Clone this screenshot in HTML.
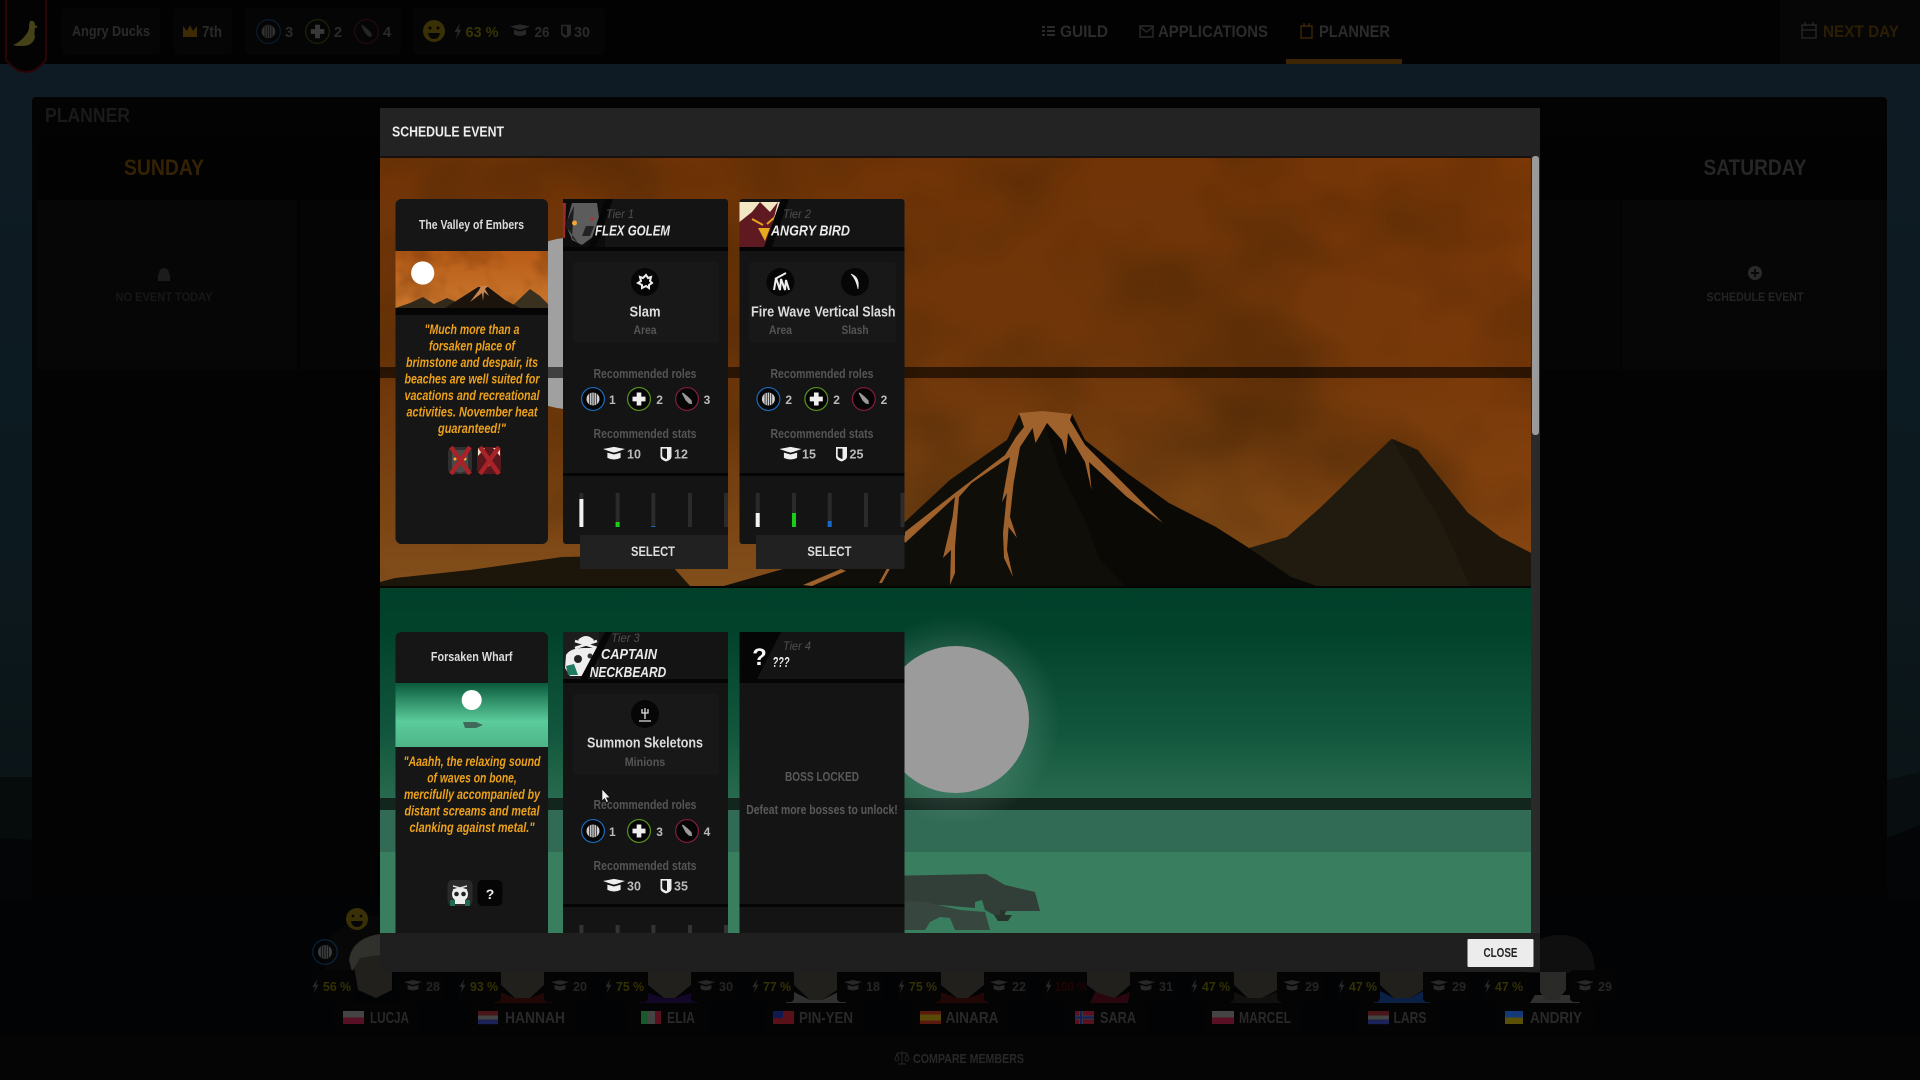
<!DOCTYPE html>
<html lang="en"><head><meta charset="utf-8"><title>Schedule Event</title>
<style>
html,body{margin:0;padding:0;width:1920px;height:1080px;overflow:hidden;background:#000}
svg{display:block}
text{font-family:"Liberation Sans",sans-serif;font-weight:700}
</style></head><body>
<svg xmlns="http://www.w3.org/2000/svg" width="1920" height="1080" viewBox="0 0 1920 1080">
<defs>
<linearGradient id="bgb" x1="0" y1="0" x2="0" y2="1"><stop offset="0" stop-color="#0e1b24"/><stop offset=".6" stop-color="#0c1a20"/><stop offset="1" stop-color="#0b1417"/></linearGradient>
<linearGradient id="org" x1="0" y1="0" x2="0" y2="1"><stop offset="0" stop-color="#703407"/><stop offset=".5" stop-color="#70370a"/><stop offset=".85" stop-color="#7c4614"/><stop offset="1" stop-color="#824f1b"/></linearGradient>
<linearGradient id="orgr" x1="0" y1="0" x2="1" y2="0"><stop offset=".72" stop-color="#8a3d08" stop-opacity="0"/><stop offset="1" stop-color="#8a3d08" stop-opacity=".45"/></linearGradient>
<linearGradient id="grn" x1="0" y1="0" x2="0" y2="1"><stop offset="0" stop-color="#013f29"/><stop offset=".2" stop-color="#02422b"/><stop offset=".7" stop-color="#12573d"/><stop offset="1" stop-color="#286a50"/></linearGradient>
<linearGradient id="thg" x1="0" y1="0" x2="0" y2="1"><stop offset="0" stop-color="#0a5a3c"/><stop offset=".6" stop-color="#5ccc9c"/><stop offset="1" stop-color="#4db487"/></linearGradient>
<linearGradient id="tho" x1="0" y1="0" x2="0" y2="1"><stop offset="0" stop-color="#b85c18"/><stop offset="1" stop-color="#cc7a30"/></linearGradient>
<radialGradient id="glow"><stop offset=".6" stop-color="#fff" stop-opacity=".13"/><stop offset="1" stop-color="#fff" stop-opacity="0"/></radialGradient>
<filter id="blot" x="0" y="0" width="100%" height="100%" color-interpolation-filters="sRGB"><feTurbulence type="fractalNoise" baseFrequency=".006 .008" numOctaves="3" seed="7"/><feColorMatrix values="0 0 0 0 .2  0 0 0 0 .11  0 0 0 0 .01  2.4 0 0 0 -1"/></filter>
<filter id="blot2" x="0" y="0" width="100%" height="100%" color-interpolation-filters="sRGB"><feTurbulence type="fractalNoise" baseFrequency=".03" numOctaves="3" seed="3"/><feColorMatrix values="0 0 0 0 .35  0 0 0 0 .15  0 0 0 0 0  2 0 0 0 -.85"/></filter>
<clipPath id="sc"><rect x="380" y="158" width="1151" height="775"/></clipPath>
<clipPath id="c1"><rect x="563" y="199" width="165" height="345"/></clipPath>
<clipPath id="c2"><rect x="739.5" y="199" width="165" height="345"/></clipPath>
<clipPath id="th"><rect x="395.5" y="251" width="152.5" height="64"/></clipPath>

<symbol id="cap" viewBox="-10 -10 20 20" overflow="visible"><path fill="currentColor" d="M-10,-4.500 L0,-6.500 L10,-4.500 L3,-2 L0,-1.200 L-3,-2 Z M-6,-1.300 L0,.5 L6,-1.300 V3.500 Q0,6.500 -6,3.500Z"/></symbol>
<symbol id="shd" viewBox="-10 -10 20 20" overflow="visible"><path fill="currentColor" d="M-5.500,-7H5.500V3Q5,6 0,7.500Q-5,6 -5.500,3Z"/><path fill="#141414" d="M-3.800,-5.400H1V5Q-3,4 -3.800,2Z"/></symbol>
<symbol id="shdd" viewBox="-10 -10 20 20" overflow="visible"><path fill="currentColor" d="M-5.500,-7H5.500V3Q5,6 0,7.500Q-5,6 -5.500,3Z"/><path fill="#060606" d="M-3.800,-5.400H1V5Q-3,4 -3.800,2Z"/></symbol>
<symbol id="tank" viewBox="-14 -14 28 28" overflow="visible"><circle r="12.300" fill="#050505" stroke="#1a6bbd" stroke-width="1.300"/><circle r="7" fill="#cfcfcf"/><path d="M-3.600,-6V6M-1.200,-7V7M1.200,-7V7M3.600,-6V6" stroke="#222" stroke-width=".9"/></symbol>
<symbol id="heal" viewBox="-14 -14 28 28" overflow="visible"><circle r="12.300" fill="#050505" stroke="#5a951f" stroke-width="1.300"/><path fill="#eee" d="M-2.500,-7H2.500V-2.500H7V2.500H2.500V7H-2.500V2.500H-7V-2.500H-2.500Z"/></symbol>
<symbol id="dps" viewBox="-14 -14 28 28" overflow="visible"><circle r="12.300" fill="#050505" stroke="#861c40" stroke-width="1.300"/><path fill="#9a9a9a" d="M-5.500,-6 L-4.500,-7 L1,-2.500 L5,1.500 L5.500,5.500 L2,5 L-1.500,1.500Z"/></symbol>
<symbol id="bolt" viewBox="-6 -9 12 18" overflow="visible"><path fill="currentColor" d="M2,-8 L-3.400,1 H-.4 L-2,8 L3.400,-1.400 H.4Z"/></symbol>
</defs>

<!-- page -->
<rect width="1920" height="1080" fill="#020304"/>
<rect y="64" width="1920" height="720" fill="url(#bgb)"/>
<path d="M0,777 L32,777 V840 L0,838Z" fill="#060b0c"/>
<path d="M0,838 L32,840 V900 L0,900Z M1887,838 Q1905,830 1920,820 V900 H1887Z" fill="#030506"/>
<path d="M1887,780 L1920,772 V825 L1887,838Z" fill="#080e10"/>
<rect y="1035" width="1920" height="45" fill="#050505"/>
<rect width="1920" height="64" fill="#020202"/>
<rect x="1780" width="140" height="64" fill="#060606"/>

<!-- top bar -->
<path d="M6,-2V60Q26,84 46,60V-2Z" fill="#030303" stroke="#2c0406" stroke-width="2"/>
<path d="M30,21 Q35,20 35,25 L38,27 L35,28 Q34,33 35,37 Q33,46 22,46 Q15,46 13,45 Q20,42 25,36 Q30,30 29,25Z" fill="#454219"/>
<g fill="#050505"><rect x="62" y="8" width="98" height="47" rx="4"/><rect x="174" y="8" width="58" height="47" rx="4"/><rect x="245" y="8" width="156" height="47" rx="4"/><rect x="413" y="8" width="192" height="47" rx="4"/></g>
<text x="111" y="36" font-size="15" fill="#2a2a2a" text-anchor="middle" textLength="78" lengthAdjust="spacingAndGlyphs">Angry Ducks</text>
<path d="M183,37 V26 L187,31 L190,25 L193,31 L197,26 V37Z" fill="#3d2b05"/>
<text x="212" y="37" font-size="16" fill="#2a2a2a" text-anchor="middle" textLength="20" lengthAdjust="spacingAndGlyphs">7th</text>
<g opacity=".22"><use href="#tank" x="255" y="18" width="27" height="27"/><use href="#heal" x="304" y="18" width="27" height="27"/><use href="#dps" x="353" y="18" width="27" height="27"/></g>
<g font-size="15" fill="#2a2a2a" text-anchor="middle"><text x="289" y="37">3</text><text x="338" y="37">2</text><text x="387" y="37">4</text></g>
<circle cx="434" cy="31" r="11" fill="#3a3005"/><path d="M428,33 H440 Q439,39 434,39 Q429,39 428,33Z" fill="#050505"/><circle cx="430" cy="28" r="1.500" fill="#050505"/><circle cx="438" cy="28" r="1.500" fill="#050505"/>
<use href="#bolt" x="452" y="22" width="12" height="18" color="#282828"/>
<text x="482" y="37" font-size="15" fill="#373405" text-anchor="middle" textLength="33" lengthAdjust="spacingAndGlyphs">63 %</text>
<use href="#cap" x="510" y="21" width="20" height="20" color="#282828"/>
<text x="542" y="37" font-size="15" fill="#2a2a2a" text-anchor="middle" textLength="15" lengthAdjust="spacingAndGlyphs">26</text>
<use href="#shdd" x="557" y="22" width="18" height="18" color="#282828"/>
<text x="582" y="37" font-size="15" fill="#2a2a2a" text-anchor="middle" textLength="16" lengthAdjust="spacingAndGlyphs">30</text>
<!-- nav -->
<path d="M1042,26h3v2h-3zM1047,26h8v2h-8zM1042,30h3v2h-3zM1047,30h8v2h-8zM1042,34h3v2h-3zM1047,34h8v2h-8z" fill="#2a2a2a"/>
<text x="1084" y="37" font-size="17" fill="#2b2b2b" text-anchor="middle" textLength="48" lengthAdjust="spacingAndGlyphs">GUILD</text>
<path d="M1140,26h13v11h-13zM1140,27l6.500,5l6.500,-5" fill="none" stroke="#2a2a2a" stroke-width="1.400"/>
<text x="1213" y="37" font-size="17" fill="#2b2b2b" text-anchor="middle" textLength="110" lengthAdjust="spacingAndGlyphs">APPLICATIONS</text>
<path d="M1301,26h11v12h-11zM1304,23v4M1309,23v4" fill="none" stroke="#3a2505" stroke-width="1.400"/>
<text x="1354.500" y="37" font-size="17" fill="#2b2b2b" text-anchor="middle" textLength="71" lengthAdjust="spacingAndGlyphs">PLANNER</text>
<rect x="1286" y="59" width="116" height="5" fill="#3c2405"/>
<path d="M1802,25h14v13h-14zM1802,30h14M1805,22v4M1813,22v4" fill="none" stroke="#2a2a2a" stroke-width="1.300"/>
<text x="1861" y="37" font-size="17" fill="#2c1e05" text-anchor="middle" textLength="76" lengthAdjust="spacingAndGlyphs">NEXT DAY</text>

<!-- planner panel -->
<rect x="32" y="97" width="1855" height="801" rx="4" fill="#030303"/>
<rect x="38" y="137" width="1849" height="63" fill="#020202"/>
<rect x="38" y="200" width="259" height="170" fill="#060606"/>
<rect x="300" y="200" width="80" height="170" fill="#050505"/>
<rect x="1540" y="200" width="80" height="170" fill="#050505"/>
<rect x="1622" y="200" width="265" height="170" fill="#060606"/>
<text x="87.500" y="122" font-size="20" fill="#1a1a1a" text-anchor="middle" textLength="85" lengthAdjust="spacingAndGlyphs">PLANNER</text>
<text x="164" y="175" font-size="22" fill="#352205" text-anchor="middle" textLength="80" lengthAdjust="spacingAndGlyphs">SUNDAY</text>
<text x="1755" y="175" font-size="22" fill="#262626" text-anchor="middle" textLength="103" lengthAdjust="spacingAndGlyphs">SATURDAY</text>
<path d="M159,273a5,5 0 0 1 10,0v1h1v7h-12v-7h1z" fill="#1c1c1c"/>
<text x="164" y="301" font-size="12" fill="#171717" text-anchor="middle" textLength="97" lengthAdjust="spacingAndGlyphs">NO EVENT TODAY</text>
<circle cx="1755" cy="273" r="7" fill="#2a2a2a"/><path d="M1755,269v8M1751,273h8" stroke="#080808" stroke-width="2"/>
<text x="1755" y="301" font-size="12" fill="#242424" text-anchor="middle" textLength="97" lengthAdjust="spacingAndGlyphs">SCHEDULE EVENT</text>

<!-- members -->
<g>
<path d="M325,972 V945 Q340,920 375,915 L395,915 V972Z" fill="#070707"/>
<circle cx="357" cy="919" r="11" fill="#3a3005"/><path d="M351,921H363Q362,927 357,927Q352,927 351,921Z" fill="#060606"/><circle cx="353" cy="916" r="1.400" fill="#060606"/><circle cx="361" cy="916" r="1.400" fill="#060606"/>
<use href="#tank" x="311" y="938" width="28" height="28" opacity=".28"/>
</g>
<g fill="#22201c">
<path d="M352,955H392V990L376,998L358,990Z"/>
<path d="M501,972H544V985L530,998H515L501,985Z"/><path d="M648,972H691V985L675,998H664L648,985Z"/>
<path d="M794,972H837V990L822,1000H810L794,985Z"/><path d="M941,972H984V985L968,998H957L941,985Z"/>
<path d="M1087,972H1130V985L1115,998H1104L1087,985Z"/><path d="M1234,972H1277V990L1262,998H1248L1234,985Z"/>
<path d="M1380,972H1423V990L1410,998H1394L1380,985Z"/>
</g>
<path d="M349,960 Q352,938 380,934 V955 L360,958 L352,972Z" fill="#30302c"/>
<g>
<path d="M500,992L515,998H530L546,992L552,1003H494Z" fill="#220707"/>
<path d="M645,992L664,998H675L694,992L698,1003H640Z" fill="#120726"/>
<path d="M790,990L810,1000H822L842,990L846,1003H786Z" fill="#30302e"/>
<path d="M940,992L957,998H968L985,992L990,1003H935Z" fill="#220707"/>
<path d="M1095,992L1115,998L1130,992L1128,1003H1090Z" fill="#2a060e"/>
<path d="M1234,992L1248,998H1262L1277,992L1282,1003H1230Z" fill="#12100e"/>
<path d="M1378,990L1394,998H1410L1425,990L1430,1003H1374Z" fill="#0a2044"/>
<path d="M1535,995H1575L1580,1003H1530Z" fill="#30302e"/>
<path d="M1525,973 Q1525,935 1560,935 Q1595,935 1595,973 V1000 H1578 V973H1540Z" fill="#0f0f0f"/>
<path d="M1540,972H1566V990L1558,1000H1546L1540,992Z" fill="#2a2a28"/>
</g>
<!-- stat chips + plates -->
<g fill="#040404">
<rect x="312" y="970" width="43" height="32" rx="4"/><rect x="398" y="970" width="46" height="32" rx="4"/>
<rect x="458" y="970" width="43" height="32" rx="4"/><rect x="544" y="970" width="46" height="32" rx="4"/>
<rect x="605" y="970" width="43" height="32" rx="4"/><rect x="691" y="970" width="46" height="32" rx="4"/>
<rect x="751" y="970" width="43" height="32" rx="4"/><rect x="837" y="970" width="46" height="32" rx="4"/>
<rect x="898" y="970" width="43" height="32" rx="4"/><rect x="984" y="970" width="46" height="32" rx="4"/>
<rect x="1044" y="970" width="43" height="32" rx="4"/><rect x="1130" y="970" width="46" height="32" rx="4"/>
<rect x="1191" y="970" width="43" height="32" rx="4"/><rect x="1277" y="970" width="46" height="32" rx="4"/>
<rect x="1337" y="970" width="43" height="32" rx="4"/><rect x="1423" y="970" width="46" height="32" rx="4"/>
<rect x="1484" y="970" width="43" height="32" rx="4"/><rect x="1570" y="970" width="46" height="32" rx="4"/>
<rect x="334" y="1003" width="85" height="31" rx="3"/><rect x="470" y="1003" width="105" height="31" rx="3"/>
<rect x="626" y="1003" width="84" height="31" rx="3"/><rect x="764" y="1003" width="99" height="31" rx="3"/>
<rect x="912" y="1003" width="97" height="31" rx="3"/><rect x="1064" y="1003" width="83" height="31" rx="3"/>
<rect x="1204" y="1003" width="98" height="31" rx="3"/><rect x="1357" y="1003" width="84" height="31" rx="3"/>
<rect x="1496" y="1003" width="98" height="31" rx="3"/>
</g>
<g font-size="13" text-anchor="middle">
<g fill="#343105">
<text x="337" y="991" textLength="28" lengthAdjust="spacingAndGlyphs">56 %</text>
<text x="484" y="991" textLength="28" lengthAdjust="spacingAndGlyphs">93 %</text>
<text x="630" y="991" textLength="28" lengthAdjust="spacingAndGlyphs">75 %</text>
<text x="777" y="991" textLength="28" lengthAdjust="spacingAndGlyphs">77 %</text>
<text x="923" y="991" textLength="28" lengthAdjust="spacingAndGlyphs">75 %</text>
<text x="1216" y="991" textLength="28" lengthAdjust="spacingAndGlyphs">47 %</text>
<text x="1363" y="991" textLength="28" lengthAdjust="spacingAndGlyphs">47 %</text>
<text x="1509" y="991" textLength="28" lengthAdjust="spacingAndGlyphs">47 %</text>
</g>
<text x="1071" y="991" fill="#200405" textLength="32" lengthAdjust="spacingAndGlyphs">100 %</text>
<g fill="#252525">
<text x="433" y="991" textLength="14" lengthAdjust="spacingAndGlyphs">28</text><text x="580" y="991" textLength="14" lengthAdjust="spacingAndGlyphs">20</text><text x="726" y="991" textLength="14" lengthAdjust="spacingAndGlyphs">30</text><text x="873" y="991" textLength="14" lengthAdjust="spacingAndGlyphs">18</text><text x="1019" y="991" textLength="14" lengthAdjust="spacingAndGlyphs">22</text><text x="1166" y="991" textLength="14" lengthAdjust="spacingAndGlyphs">31</text><text x="1312" y="991" textLength="14" lengthAdjust="spacingAndGlyphs">29</text><text x="1459" y="991" textLength="14" lengthAdjust="spacingAndGlyphs">29</text><text x="1605" y="991" textLength="14" lengthAdjust="spacingAndGlyphs">29</text>
</g>
</g>
<g color="#282828">
<use href="#bolt" x="310" y="978" width="11" height="16"/><use href="#bolt" x="457" y="978" width="11" height="16"/><use href="#bolt" x="603" y="978" width="11" height="16"/><use href="#bolt" x="750" y="978" width="11" height="16"/><use href="#bolt" x="896" y="978" width="11" height="16"/><use href="#bolt" x="1043" y="978" width="11" height="16"/><use href="#bolt" x="1189" y="978" width="11" height="16"/><use href="#bolt" x="1336" y="978" width="11" height="16"/><use href="#bolt" x="1482" y="978" width="11" height="16"/>
<use href="#cap" x="404" y="977" width="18" height="18"/><use href="#cap" x="551" y="977" width="18" height="18"/><use href="#cap" x="697" y="977" width="18" height="18"/><use href="#cap" x="844" y="977" width="18" height="18"/><use href="#cap" x="990" y="977" width="18" height="18"/><use href="#cap" x="1137" y="977" width="18" height="18"/><use href="#cap" x="1283" y="977" width="18" height="18"/><use href="#cap" x="1430" y="977" width="18" height="18"/><use href="#cap" x="1576" y="977" width="18" height="18"/>
</g>
<g font-size="16" fill="#292929" text-anchor="middle">
<text x="389.500" y="1023" textLength="39" lengthAdjust="spacingAndGlyphs">LUCJA</text>
<text x="535" y="1023" textLength="60" lengthAdjust="spacingAndGlyphs">HANNAH</text>
<text x="681" y="1023" textLength="28" lengthAdjust="spacingAndGlyphs">ELIA</text>
<text x="826" y="1023" textLength="54" lengthAdjust="spacingAndGlyphs">PIN-YEN</text>
<text x="972" y="1023" textLength="53" lengthAdjust="spacingAndGlyphs">AINARA</text>
<text x="1118" y="1023" textLength="36" lengthAdjust="spacingAndGlyphs">SARA</text>
<text x="1265" y="1023" textLength="52" lengthAdjust="spacingAndGlyphs">MARCEL</text>
<text x="1410" y="1023" textLength="33" lengthAdjust="spacingAndGlyphs">LARS</text>
<text x="1556" y="1023" textLength="52" lengthAdjust="spacingAndGlyphs">ANDRIY</text>
</g>
<!-- flags -->
<rect x="343" y="1011" width="21" height="6.500" fill="#444"/><rect x="343" y="1017.500" width="21" height="6.500" fill="#5a1024"/>
<rect x="478" y="1011" width="20" height="4.400" fill="#4a1518"/><rect x="478" y="1015.400" width="20" height="4.400" fill="#444"/><rect x="478" y="1019.800" width="20" height="4.400" fill="#1a2258"/>
<rect x="641" y="1011" width="7" height="13" fill="#1a5a2a"/><rect x="648" y="1011" width="7" height="13" fill="#444"/><rect x="655" y="1011" width="6" height="13" fill="#5a1020"/>
<rect x="773" y="1011" width="21" height="13" fill="#5a1018"/><rect x="773" y="1011" width="10" height="7" fill="#101a50"/>
<rect x="920" y="1011" width="21" height="13" fill="#5a1a10"/><rect x="920" y="1014.500" width="21" height="6" fill="#5a4a08"/>
<rect x="1075" y="1011" width="19" height="13" fill="#5a1020"/><rect x="1079" y="1011" width="4" height="13" fill="#3a3a3a"/><rect x="1075" y="1015.500" width="19" height="4" fill="#3a3a3a"/><rect x="1080" y="1011" width="2" height="13" fill="#12205a"/><rect x="1075" y="1016.500" width="19" height="2" fill="#12205a"/>
<rect x="1212" y="1011" width="22" height="6.500" fill="#444"/><rect x="1212" y="1017.500" width="22" height="6.500" fill="#5a1024"/>
<rect x="1368" y="1011" width="21" height="4.400" fill="#4a1518"/><rect x="1368" y="1015.400" width="21" height="4.400" fill="#444"/><rect x="1368" y="1019.800" width="21" height="4.400" fill="#1a2258"/>
<rect x="1505" y="1011" width="18" height="6.500" fill="#123a78"/><rect x="1505" y="1017.500" width="18" height="6.500" fill="#5a5008"/>
<!-- compare -->
<path d="M897,1053h10M902,1051v13M898,1064h8M895,1059l2,-5l2,5a2,2 0 0 1-4,0M905,1059l2,-5l2,5a2,2 0 0 1-4,0" fill="none" stroke="#262626" stroke-width="1"/>
<text x="968.500" y="1063" font-size="13" fill="#282828" text-anchor="middle" textLength="111" lengthAdjust="spacingAndGlyphs">COMPARE MEMBERS</text>

<!-- modal -->
<rect x="380" y="108" width="1160" height="48" fill="#232323"/>
<rect x="380" y="156" width="1160" height="2" fill="#161010"/>
<text x="448" y="136.500" font-size="14.500" fill="#ededed" text-anchor="middle" textLength="112" lengthAdjust="spacingAndGlyphs">SCHEDULE EVENT</text>
<rect x="380" y="933" width="1160" height="39" fill="#1f1f1f"/>
<rect x="1531" y="156" width="9" height="777" fill="#2a2a2a"/>
<rect x="1532" y="156" width="7" height="279" rx="3" fill="#9a9a9a"/>
<rect x="1467.500" y="939" width="66" height="28" rx="1" fill="#ececec"/>
<text x="1500.500" y="957" font-size="13" fill="#222" text-anchor="middle" textLength="34" lengthAdjust="spacingAndGlyphs">CLOSE</text>

<g clip-path="url(#sc)">
<!-- ROW 1 -->
<rect x="380" y="158" width="1151" height="430" fill="url(#org)"/>
<rect x="380" y="158" width="1151" height="428" fill="url(#orgr)"/>
<rect x="380" y="158" width="1151" height="428" filter="url(#blot)" opacity=".4"/>
<circle cx="573" cy="323.500" r="86" fill="#a0a0a0"/>
<rect x="380" y="367" width="1151" height="11" fill="#000" opacity=".6"/>
<!-- mountains -->
<path d="M1249,548 L1287,537 L1321,507 L1359,470 L1391.600,438.700 L1417.700,450 L1468,513 L1500,537 L1531,553 V586 H1249Z" fill="#211a0e"/>
<path d="M1391.600,438.700 L1417.700,450 L1468,513 L1500,537 L1531,553 V586 H1470 L1440,520Z" fill="#1b150c"/>
<path d="M1019,415 L1043,411 L1072,414 L1085,440 L1127,473 L1169,503 L1216,527 L1249,548 L1291,577 L1317,586 H724 L780,570 L840,552 L905,522 L950,480 L1007,440Z" fill="#0b0905"/>
<path d="M1019,415 L1043,420 L1060,470 L1085,520 L1100,560 L1125,586 H724 L780,570 L840,552 L905,522 L950,480 L1007,440Z" fill="#100e09"/>
<path d="M1019,413 L1043,411 L1072,414 L1070,420 L1085,445 L1163,523 L1127,497 L1089,462 L1091.500,490 L1085,462 L1068,433 L1066,455 L1062,440 L1047,423 L1035.500,443 L1032.600,428 L1020,447 L1013.600,483 L1010,517 L1017,538 L1008.600,527 L1007,550 L1013,577 L1004,558 L1003,533 L1007,493 L1002,502 L1010,457 L971.500,483 L959,497 L955,547 L955,573 L950,585 L951,550 L943,558 L952.600,517 L955,497 L905,543 L905,532 L955,493 L1005,455 L1016,437 L1024,427Z" fill="#a0622c"/>
<path d="M905,535 L920,525 L904,543 L882,583 L879,583 Z M803,585 L841,569 L846,571 L812,586Z" fill="#a0622c"/>
<!-- left ground -->
<path d="M380,586 V582 L395,578 L470,570 L562,557 L620,556 L673,567 L690,586Z" fill="#1c150a"/>
<rect x="380" y="586" width="1151" height="2" fill="#060504"/>

<!-- ROW 2 -->
<rect x="380" y="588" width="1151" height="210" fill="url(#grn)"/>
<rect x="380" y="798" width="1151" height="12" fill="#12261e"/>
<rect x="380" y="810" width="1151" height="42" fill="#316b55"/>
<rect x="380" y="852" width="1151" height="81" fill="#387e5f"/>
<circle cx="955.500" cy="719.500" r="105" fill="url(#glow)"/>
<circle cx="955.500" cy="719.500" r="73.500" fill="#9b9b9b"/>
<path d="M880,876 L986,874 L1005,885 L1035,892 L1040,911 L1007,911 L1000,918 L985,910 L982,900 L975,902 L975,908 L940,905 L905,905 L880,900Z" fill="#323f38"/>
<path d="M880,900 L925,902 L960,910 L985,912 L990,930 L955,930 L950,918 L940,917 L930,922 L925,930 L880,930Z" fill="#37463e"/>
<path d="M994,915 H1012 L1008,921 H998Z" fill="#27332d"/><rect x="1000" y="910" width="5" height="6" fill="#27332d"/>

<!-- CARD: VALLEY -->
<rect x="395.500" y="199" width="152.500" height="345" rx="6" fill="#161616"/>
<text x="471.500" y="229" font-size="13" fill="#dcdcdc" text-anchor="middle" textLength="105" lengthAdjust="spacingAndGlyphs">The Valley of Embers</text>
<g clip-path="url(#th)">
<rect x="395.500" y="251" width="152.500" height="64" fill="url(#tho)"/>
<rect x="395.500" y="251" width="152.500" height="57" filter="url(#blot2)" opacity=".45"/>
<circle cx="422.700" cy="273" r="11.600" fill="#fff"/>
<path d="M395.500,308 L410,303 L423,297 L434,304 L447,298 L458,303 L470,308Z" fill="#33291a"/>
<path d="M510,308 L530,289 L540,296 L548,304V308Z" fill="#3a3020"/>
<path d="M445,308 L478,287 L488,287 L505,300 L520,308Z" fill="#1a140d"/>
<path d="M481,286h7l-3,3l4,7l-5,-4l-1,9l-1,-8l-12,9l9,-12z" fill="#c98550"/>
<rect x="395.500" y="308" width="152.500" height="7" fill="#050505"/>
</g>
<g font-size="13.500" fill="#eca11b" text-anchor="middle" font-style="italic">
<text x="472" y="334" textLength="95" lengthAdjust="spacingAndGlyphs">"Much more than a</text>
<text x="472" y="350.500" textLength="86" lengthAdjust="spacingAndGlyphs">forsaken place of</text>
<text x="472" y="367" textLength="132" lengthAdjust="spacingAndGlyphs">brimstone and despair, its</text>
<text x="472" y="383.500" textLength="135" lengthAdjust="spacingAndGlyphs">beaches are well suited for</text>
<text x="472" y="400" textLength="135" lengthAdjust="spacingAndGlyphs">vacations and recreational</text>
<text x="472" y="416.500" textLength="131" lengthAdjust="spacingAndGlyphs">activities. November heat</text>
<text x="472" y="433" textLength="68" lengthAdjust="spacingAndGlyphs">guaranteed!"</text>
</g>
<rect x="448" y="447" width="24" height="27" rx="5" fill="#2f2f2f"/><rect x="477" y="447" width="24" height="27" rx="5" fill="#5a181c"/>
<path d="M452,450H468V470L460,473L452,470Z" fill="#4a4a4a"/>
<circle cx="455" cy="459" r="1.500" fill="#fa3"/><circle cx="465" cy="459" r="1.500" fill="#fa3"/>
<path d="M478,448h7l-7,8zM500,448h-7l7,8z" fill="#f0e4c4"/><path d="M487,460h4l-2,7z" fill="#e7a41f"/>
<path d="M451,447 L470,474 M470,447 L451,474 M480,447 L499,474 M499,447 L480,474" stroke="#a82228" stroke-width="4.500"/>

<!-- CARD: FLEX GOLEM -->
<g clip-path="url(#c1)">
<rect x="563" y="199" width="165" height="345" rx="3" fill="#141414"/>
<rect x="563" y="199" width="42" height="48" fill="#0c0c0c"/>
<path d="M563,203 L566,203 L565,238 L563,238Z" fill="#9c2a2a"/>
<path d="M572,203 H597 L599,217 L594,236 L582,245 L572,240 L566,225Z" fill="#5c5c5c"/>
<path d="M565,225 L574,206 L572,238 L578,243Z" fill="#1d1d1d"/>
<path d="M586,226 H594 L590,236 H582Z" fill="#222"/>
<circle cx="574.500" cy="223" r="2.500" fill="#f0a43a"/><circle cx="592" cy="219" r="1.800" fill="#a33"/>
<path d="M605,199 H613 L596,247 H589Z" fill="#060606"/>
<rect x="563" y="247" width="165" height="4" fill="#050505"/>
<text x="620" y="218" font-size="12" fill="#505050" text-anchor="middle" style="font-style:italic;font-weight:400" textLength="28" lengthAdjust="spacingAndGlyphs">Tier 1</text>
<text x="632.500" y="235.500" font-size="15" fill="#eaeaea" text-anchor="middle" font-style="italic" textLength="75" lengthAdjust="spacingAndGlyphs">FLEX GOLEM</text>
<rect x="573" y="262" width="146" height="81" rx="3" fill="#181818"/>
<circle cx="645" cy="282" r="14" fill="#060606"/>
<path d="M640,277 L643,278 L646,275 L648,278 L651,277 L650,281 L652,283 L649,285 L649,288 L646,286 L642,288 L642,285 L638,283 L641,281Z" fill="none" stroke="#eee" stroke-width="2"/>
<text x="645" y="316.500" font-size="15" fill="#dcdcdc" text-anchor="middle" textLength="31" lengthAdjust="spacingAndGlyphs">Slam</text>
<text x="645" y="334" font-size="12" fill="#555" text-anchor="middle" textLength="23" lengthAdjust="spacingAndGlyphs">Area</text>
<text x="645" y="378" font-size="12.500" fill="#555" text-anchor="middle" textLength="103" lengthAdjust="spacingAndGlyphs">Recommended roles</text>
<use href="#tank" x="580" y="386" width="26" height="26"/><use href="#heal" x="626" y="386" width="26" height="26"/><use href="#dps" x="674" y="386" width="26" height="26"/>
<g font-size="12" fill="#bbb" text-anchor="middle"><text x="612.400" y="404">1</text><text x="659.600" y="404">2</text><text x="707" y="404">3</text></g>
<text x="645" y="438" font-size="12.500" fill="#555" text-anchor="middle" textLength="103" lengthAdjust="spacingAndGlyphs">Recommended stats</text>
<use href="#cap" x="603" y="443" width="22" height="22" color="#eee"/><use href="#shd" x="656" y="444" width="20" height="20" color="#eee"/>
<g font-size="12.500" fill="#bbb" text-anchor="middle"><text x="634" y="458.500">10</text><text x="681" y="458.500">12</text></g>
<rect x="563" y="473" width="165" height="3" fill="#050505"/>
</g>
<rect x="579.400" y="493" width="4" height="34" fill="#2b2b2b"/><rect x="615.600" y="493" width="4" height="34" fill="#2b2b2b"/><rect x="651.400" y="493" width="4" height="34" fill="#2b2b2b"/><rect x="688" y="493" width="4" height="34" fill="#2b2b2b"/><rect x="724" y="493" width="4" height="34" fill="#2b2b2b"/>
<rect x="579.400" y="499" width="4" height="28" fill="#f2f2f2"/><rect x="615.600" y="522" width="4" height="5" fill="#17cf17"/><rect x="651.400" y="526" width="4" height="1" fill="#1766c9"/>
<rect x="580" y="535" width="148" height="34" fill="#212121"/>
<text x="653" y="556" font-size="13.500" fill="#dcdcdc" text-anchor="middle" textLength="44" lengthAdjust="spacingAndGlyphs">SELECT</text>

<!-- CARD: ANGRY BIRD -->
<g clip-path="url(#c2)">
<rect x="739.500" y="199" width="165" height="345" rx="3" fill="#141414"/>
<path d="M739.500,202 H782 L768,247 H739.500Z" fill="#f3e6c4"/>
<path d="M739.500,222 L752,212 L760,202 L770,212 L778,202 L770,233 L766,247 H739.500Z" fill="#5e1a20"/>
<path d="M752,219 L763,225 M775,217 L767,224" stroke="#e7a41f" stroke-width="2"/>
<path d="M758,228 H770 L765,241Z" fill="#e8a920"/>
<path d="M781,199 H789 L772,247 H764Z" fill="#060606"/>
<rect x="739.500" y="247" width="165" height="4" fill="#050505"/>
<text x="797" y="218" font-size="12" fill="#505050" text-anchor="middle" style="font-style:italic;font-weight:400" textLength="28" lengthAdjust="spacingAndGlyphs">Tier 2</text>
<text x="810.500" y="235.500" font-size="15" fill="#eaeaea" text-anchor="middle" font-style="italic" textLength="79" lengthAdjust="spacingAndGlyphs">ANGRY BIRD</text>
<rect x="749" y="262" width="147" height="81" rx="3" fill="#181818"/>
<circle cx="780.500" cy="282" r="14" fill="#060606"/><circle cx="855" cy="282" r="14" fill="#060606"/>
<path d="M775,279 L786,273 M774,290 L776,278 L780,290 L781,279 L785,290 L786,280 L789,290" fill="none" stroke="#eee" stroke-width="2"/>
<path d="M851,274 Q860,277 858,289 Q856,279 851,274Z" fill="#eee" stroke="#eee" stroke-width=".6"/>
<text x="780.700" y="316.500" font-size="15" fill="#dcdcdc" text-anchor="middle" textLength="59.500" lengthAdjust="spacingAndGlyphs">Fire Wave</text>
<text x="855" y="316.500" font-size="15" fill="#dcdcdc" text-anchor="middle" textLength="81" lengthAdjust="spacingAndGlyphs">Vertical Slash</text>
<text x="780.500" y="334" font-size="12" fill="#555" text-anchor="middle" textLength="23" lengthAdjust="spacingAndGlyphs">Area</text>
<text x="855" y="334" font-size="12" fill="#555" text-anchor="middle" textLength="27" lengthAdjust="spacingAndGlyphs">Slash</text>
<text x="822" y="378" font-size="12.500" fill="#555" text-anchor="middle" textLength="103" lengthAdjust="spacingAndGlyphs">Recommended roles</text>
<use href="#tank" x="755.400" y="386" width="26" height="26"/><use href="#heal" x="803.300" y="386" width="26" height="26"/><use href="#dps" x="850.800" y="386" width="26" height="26"/>
<g font-size="12" fill="#bbb" text-anchor="middle"><text x="788.700" y="404">2</text><text x="836.600" y="404">2</text><text x="884" y="404">2</text></g>
<text x="822" y="438" font-size="12.500" fill="#555" text-anchor="middle" textLength="103" lengthAdjust="spacingAndGlyphs">Recommended stats</text>
<use href="#cap" x="779.500" y="443" width="22" height="22" color="#eee"/><use href="#shd" x="831.500" y="444" width="20" height="20" color="#eee"/>
<g font-size="12.500" fill="#bbb" text-anchor="middle"><text x="809" y="458.500">15</text><text x="856.500" y="458.500">25</text></g>
<rect x="739.500" y="473" width="165" height="3" fill="#050505"/>
</g>
<rect x="755.700" y="493" width="4" height="34" fill="#2b2b2b"/><rect x="792" y="493" width="4" height="34" fill="#2b2b2b"/><rect x="827.700" y="493" width="4" height="34" fill="#2b2b2b"/><rect x="864" y="493" width="4" height="34" fill="#2b2b2b"/><rect x="900.500" y="493" width="4" height="34" fill="#2b2b2b"/>
<rect x="755.700" y="513" width="4" height="14" fill="#f2f2f2"/><rect x="792" y="513" width="4" height="14" fill="#17cf17"/><rect x="827.700" y="521" width="4" height="6" fill="#1766c9"/>
<rect x="756" y="535" width="148.500" height="34" fill="#212121"/>
<text x="829.400" y="556" font-size="13.500" fill="#dcdcdc" text-anchor="middle" textLength="44" lengthAdjust="spacingAndGlyphs">SELECT</text>

<!-- ROW 2 CARDS -->
<rect x="395.500" y="632" width="152.500" height="320" rx="6" fill="#161616"/>
<text x="471.700" y="661" font-size="13" fill="#dcdcdc" text-anchor="middle" textLength="81.600" lengthAdjust="spacingAndGlyphs">Forsaken Wharf</text>
<rect x="395.500" y="683" width="152.500" height="64" fill="url(#thg)"/>
<circle cx="471.700" cy="700" r="10" fill="#fff"/>
<path d="M463,722 H476 L483,725 L476,728 H465Z" fill="#3f6a5c"/>
<g font-size="13.500" fill="#eca11b" text-anchor="middle" font-style="italic">
<text x="472" y="766" textLength="137" lengthAdjust="spacingAndGlyphs">"Aaahh, the relaxing sound</text>
<text x="472" y="782.500" textLength="89.500" lengthAdjust="spacingAndGlyphs">of waves on bone,</text>
<text x="472" y="799" textLength="136" lengthAdjust="spacingAndGlyphs">mercifully accompanied by</text>
<text x="472" y="815.500" textLength="135" lengthAdjust="spacingAndGlyphs">distant screams and metal</text>
<text x="472" y="832" textLength="125" lengthAdjust="spacingAndGlyphs">clanking against metal."</text>
</g>
<rect x="447.500" y="880" width="25" height="26" rx="5" fill="#2a2a2a"/>
<path d="M453,886 L467,890 M467,886 L453,890" stroke="#ddd" stroke-width="1.500"/>
<path d="M452,894 Q452,888 460,888 Q468,888 468,894 Q468,898 465,900 V904 H455 V900 Q452,898 452,894Z" fill="#eee"/>
<path d="M450,900 H455 V906 H450Z M465,900 H470 V906 H465Z" fill="#1f6b55"/>
<circle cx="456.500" cy="894" r="2.300" fill="#222"/><circle cx="463.500" cy="894" r="2.300" fill="#222"/>
<rect x="477.500" y="880" width="25" height="26" rx="5" fill="#050505"/>
<text x="490" y="899" font-size="14" fill="#eee" text-anchor="middle">?</text>

<!-- captain -->
<rect x="563" y="632" width="165" height="320" fill="#141414"/>
<rect x="563" y="632" width="36" height="47" fill="#1d1d1d"/>
<path d="M575,641 L597,648 M597,641 L575,648" stroke="#eee" stroke-width="2.500"/><path d="M578,640 Q586,632 594,640 L590,644 H582Z" fill="#eee"/>
<path d="M566,655 Q570,648 584,648 H596 L594,662 L585,676 H570 L565,668Z" fill="#eee"/>
<path d="M566,666 L574,664 L578,675 H568Z" fill="#1f7a5f"/>
<circle cx="578" cy="659" r="4" fill="#222"/><circle cx="590" cy="656" r="2.500" fill="#333"/>
<path d="M605,632 H612 L588,679 H580Z" fill="#060606"/>
<rect x="563" y="679" width="165" height="4" fill="#050505"/>
<text x="625.500" y="642" font-size="12" fill="#505050" text-anchor="middle" style="font-style:italic;font-weight:400" textLength="28.500" lengthAdjust="spacingAndGlyphs">Tier 3</text>
<text x="629" y="659" font-size="15" fill="#eaeaea" text-anchor="middle" font-style="italic" textLength="56" lengthAdjust="spacingAndGlyphs">CAPTAIN</text>
<text x="628" y="677" font-size="15" fill="#eaeaea" text-anchor="middle" font-style="italic" textLength="76.500" lengthAdjust="spacingAndGlyphs">NECKBEARD</text>
<rect x="573" y="694" width="146" height="81" rx="3" fill="#181818"/>
<circle cx="645" cy="714" r="14" fill="#060606"/>
<path d="M645,708 V719 M642,709 V713 H648 V709 M639,721 H651" fill="none" stroke="#ddd" stroke-width="1.300"/>
<text x="645" y="747.500" font-size="15" fill="#dcdcdc" text-anchor="middle" textLength="116" lengthAdjust="spacingAndGlyphs">Summon Skeletons</text>
<text x="645" y="766" font-size="12" fill="#555" text-anchor="middle" textLength="40.600" lengthAdjust="spacingAndGlyphs">Minions</text>
<text x="645" y="809" font-size="12.500" fill="#555" text-anchor="middle" textLength="103" lengthAdjust="spacingAndGlyphs">Recommended roles</text>
<use href="#tank" x="580" y="818" width="26" height="26"/><use href="#heal" x="626" y="818" width="26" height="26"/><use href="#dps" x="674" y="818" width="26" height="26"/>
<g font-size="12" fill="#bbb" text-anchor="middle"><text x="612.400" y="836">1</text><text x="659.600" y="836">3</text><text x="707" y="836">4</text></g>
<text x="645" y="870" font-size="12.500" fill="#555" text-anchor="middle" textLength="103" lengthAdjust="spacingAndGlyphs">Recommended stats</text>
<use href="#cap" x="603" y="875" width="22" height="22" color="#eee"/><use href="#shd" x="656" y="876" width="20" height="20" color="#eee"/>
<g font-size="12.500" fill="#bbb" text-anchor="middle"><text x="634" y="890.500">30</text><text x="681" y="890.500">35</text></g>
<rect x="563" y="904" width="165" height="3" fill="#050505"/>
<rect x="579.400" y="925" width="4" height="10" fill="#333"/><rect x="615.600" y="925" width="4" height="10" fill="#333"/><rect x="651.400" y="925" width="4" height="10" fill="#333"/><rect x="688" y="925" width="4" height="10" fill="#333"/><rect x="724" y="925" width="4" height="10" fill="#333"/>

<!-- locked -->
<rect x="739.500" y="632" width="165" height="320" fill="#141414"/>
<path d="M739.500,632 H781 L757,679 H739.500Z" fill="#050505"/>
<rect x="739.500" y="679" width="165" height="4" fill="#050505"/>
<text x="759.500" y="665" font-size="24" fill="#f5f5f5" text-anchor="middle">?</text>
<text x="797" y="650" font-size="12" fill="#505050" text-anchor="middle" style="font-style:italic;font-weight:400" textLength="28" lengthAdjust="spacingAndGlyphs">Tier 4</text>
<text x="781" y="667" font-size="15" fill="#eaeaea" text-anchor="middle" font-style="italic" textLength="17" lengthAdjust="spacingAndGlyphs">???</text>
<text x="822" y="781" font-size="12.500" fill="#5a5a5a" text-anchor="middle" textLength="74" lengthAdjust="spacingAndGlyphs">BOSS LOCKED</text>
<text x="822" y="814" font-size="12.500" fill="#5a5a5a" text-anchor="middle" textLength="151.500" lengthAdjust="spacingAndGlyphs">Defeat more bosses to unlock!</text>
<rect x="739.500" y="904" width="165" height="3" fill="#050505"/>
</g>
<!-- cursor -->
<path d="M602,789 V801 L604.600,798.500 L606.500,802.500 L608.300,801.500 L606.400,797.800 L610,797.500Z" fill="#f2f2f2" stroke="#111" stroke-width=".6"/>
</svg>
</body></html>
